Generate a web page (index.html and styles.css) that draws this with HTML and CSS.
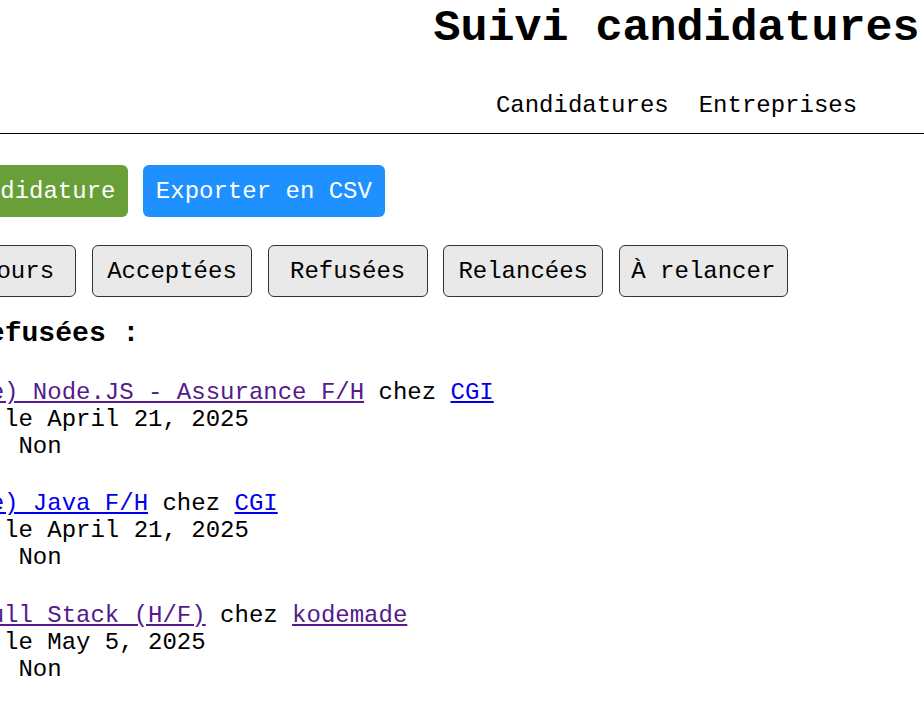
FILE: index.html
```html
<!DOCTYPE html>
<html lang="fr">
<head>
<meta charset="utf-8">
<title>Suivi candidatures</title>
<link rel="stylesheet" href="styles.css">
</head>
<body>
<div class="page">
  <header class="site-header">
    <h1 class="site-title">Suivi candidatures</h1>
    <nav class="site-nav">
      <a href="#" class="nav-link">Candidatures</a>
      <a href="#" class="nav-link">Entreprises</a>
    </nav>
  </header>
  <main class="content">
    <div class="actions">
      <button class="btn btn-add">+ Nouvelle candidature</button>
      <button class="btn btn-export">Exporter en CSV</button>
    </div>
    <div class="filters">
      <span class="filters-label">Filtre :</span>
      <button class="filter">En cours</button>
      <button class="filter">Acceptées</button>
      <button class="filter">Refusées</button>
      <button class="filter">Relancées</button>
      <button class="filter">À relancer</button>
    </div>
    <h3 class="list-title">Mes offres refusées :</h3>
    <ul class="app-list">
      <li class="app">
        <div class="app-line"><a href="#" class="link visited">Ingénieur(e) Node.JS - Assurance F/H</a> chez <a href="#" class="link">CGI</a></div>
        <div class="app-line">Postulé(e) le April 21, 2025</div>
        <div class="app-line">Relancé(e): Non</div>
      </li>
      <li class="app">
        <div class="app-line"><a href="#" class="link">Ingénieur(e) Java F/H</a> chez <a href="#" class="link">CGI</a></div>
        <div class="app-line">Postulé(e) le April 21, 2025</div>
        <div class="app-line">Relancé(e): Non</div>
      </li>
      <li class="app">
        <div class="app-line"><a href="#" class="link visited">Lead Dev Full Stack (H/F)</a> chez <a href="#" class="link visited">kodemade</a></div>
        <div class="app-line">Postulé(e) le May 5, 2025</div>
        <div class="app-line">Relancé(e): Non</div>
      </li>
    </ul>
  </main>
</div>
</body>
</html>
```
FILE: styles.css
```css
html, body {
  margin: 0;
  padding: 0;
}
body {
  overflow-x: hidden;
  font-family: "Liberation Mono", "Courier New", monospace;
  font-size: 24px;
  line-height: normal;
  color: #000;
  background: #fff;
}
.page {
  width: 1803.8px;
  margin-left: -225.4px;
}
.site-header {
  text-align: center;
  border-bottom: 1px solid #000;
  padding-bottom: 14.3px;
}
.site-title {
  margin: 2.5px 0 0;
  font-size: 45px;
  font-weight: bold;
  line-height: normal;
}
.site-nav {
  margin-top: 38.5px;
  display: flex;
  justify-content: center;
  gap: 30px;
}
.nav-link {
  color: #000;
  text-decoration: none;
}
.content {
  padding: 30.5px 11px 0;
}
.actions {
  display: flex;
  gap: 14.4px;
}
.btn {
  font: inherit;
  line-height: normal;
  color: #fff;
  border: 0;
  border-radius: 6px;
  padding: 12.75px 13px;
}
.btn-add {
  background: #689f38;
}
.btn-export {
  background: #1e90ff;
}
.filters {
  margin-top: 27.3px;
  display: flex;
  align-items: center;
  gap: 15.6px;
}
.filters-label {
  font-weight: bold;
}
.filter {
  font: inherit;
  line-height: normal;
  color: #000;
  background: #e9e9e9;
  border: 1px solid #333;
  border-radius: 6px;
  padding: 12.25px 11.5px 11.25px;
  min-width: 160px;
  box-sizing: border-box;
  text-align: center;
}
.list-title {
  font-size: 28.08px;
  font-weight: bold;
  margin: 20.9px 0 30px;
  line-height: normal;
}
.app-list {
  list-style: none;
  margin: 0;
  padding-left: 60px;
}
.app + .app {
  margin-top: 30.5px;
}
.link {
  color: #0000ee;
}
.link.visited {
  color: #551a8b;
}
```
